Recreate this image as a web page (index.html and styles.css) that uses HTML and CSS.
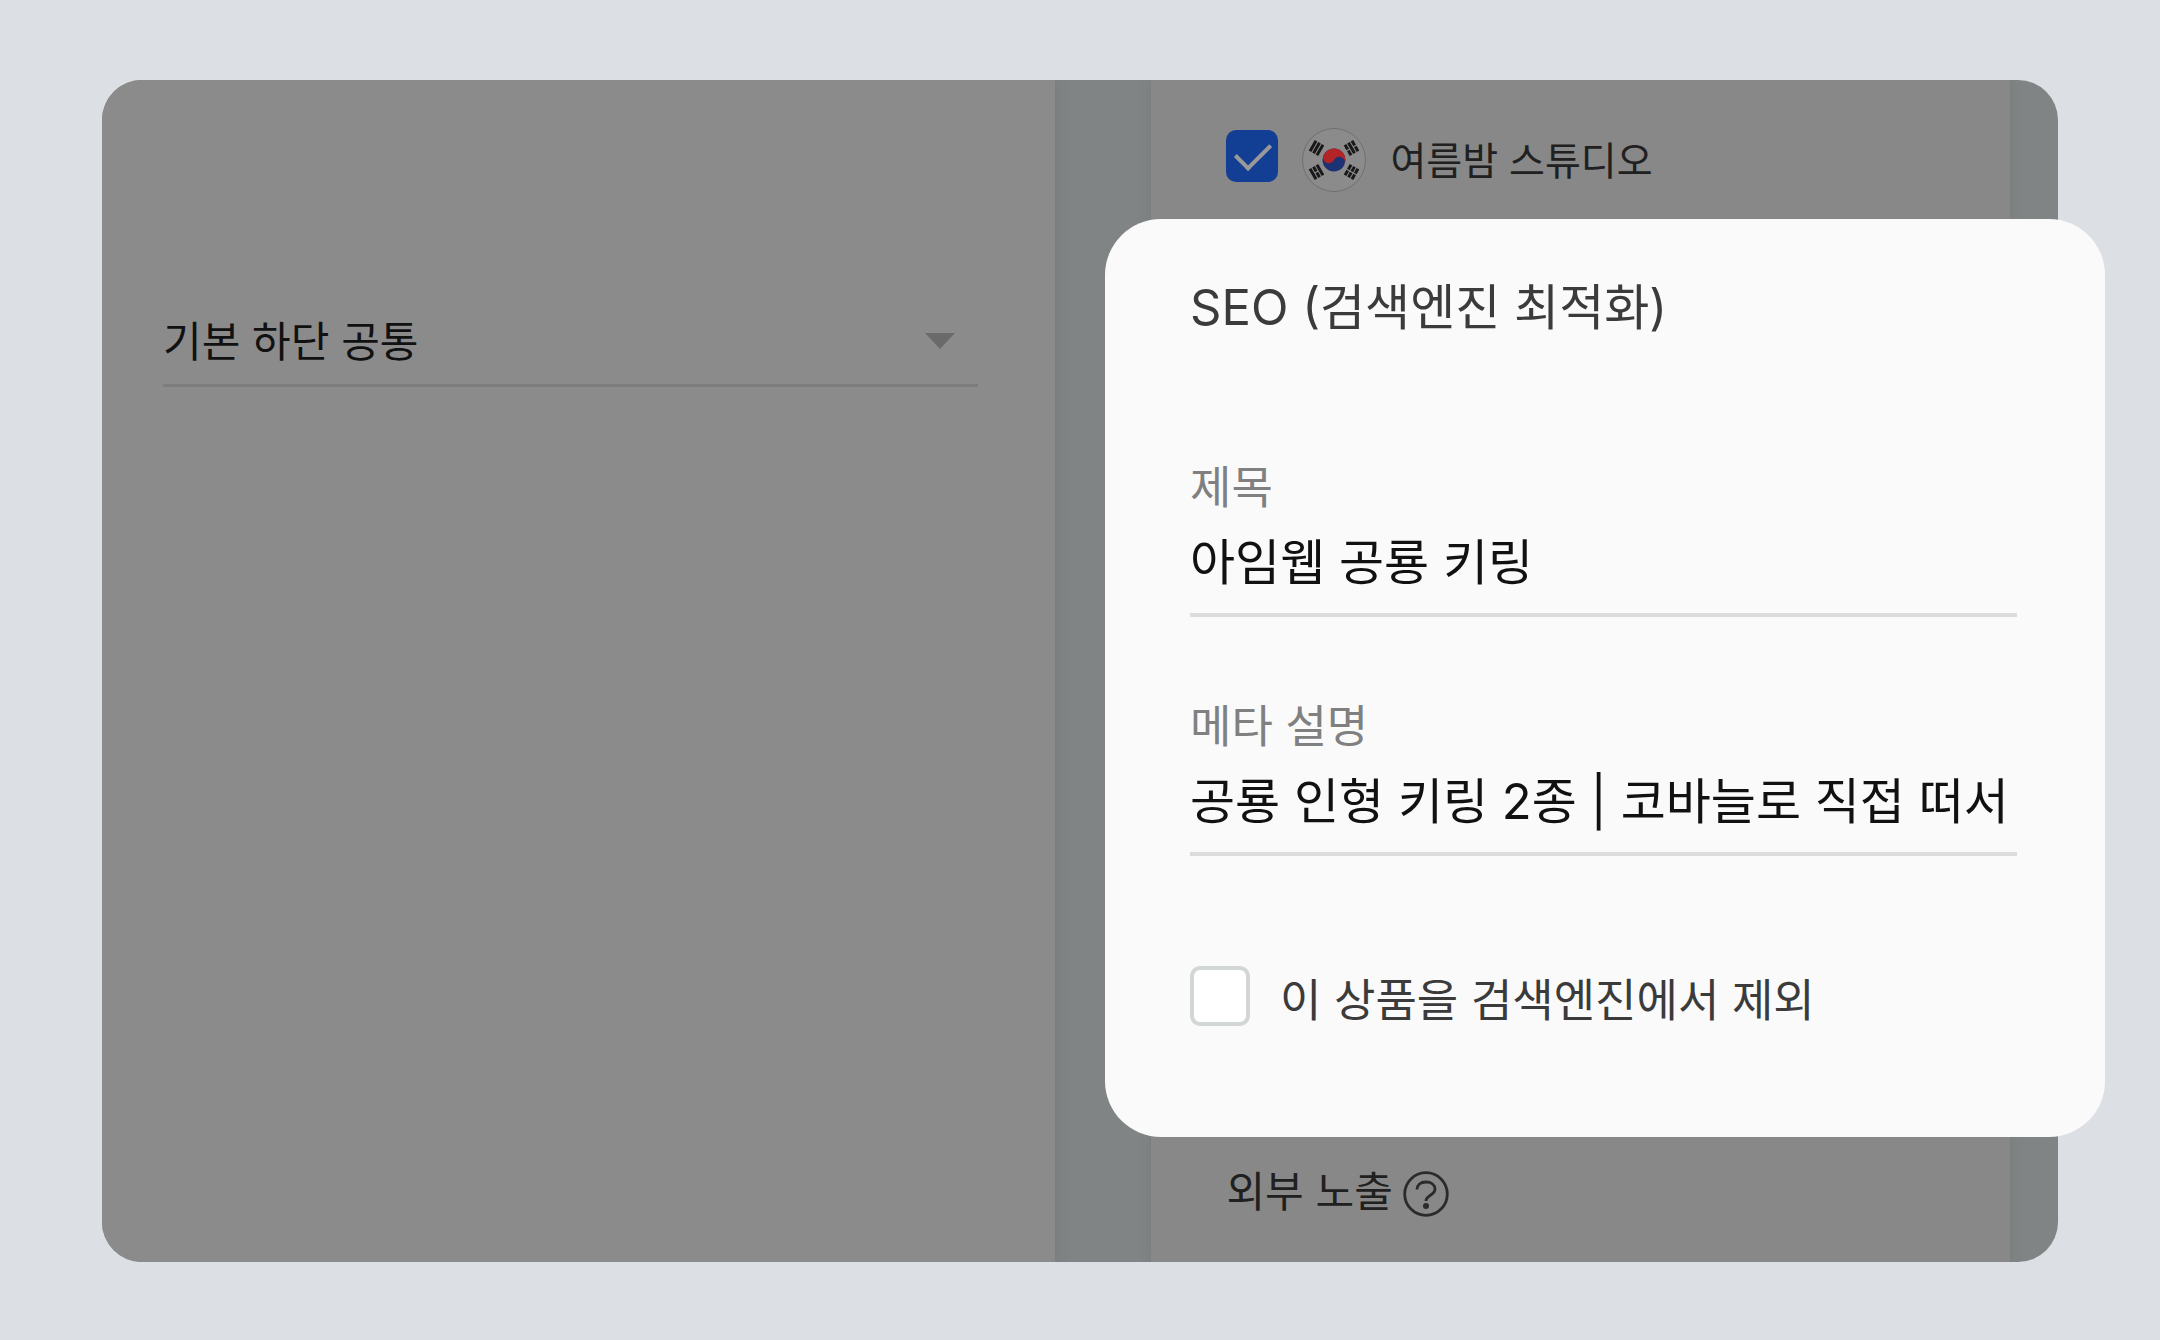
FILE: index.html
```html
<!DOCTYPE html>
<html lang="ko">
<head>
  <meta charset="UTF-8">
  <meta name="viewport" content="width=device-width, initial-scale=1.0">
  <title>SEO (검색엔진 최적화)</title>
  <link rel="stylesheet" href="styles.css">
</head>
<body>

  <main class="stage">
    <div class="backdrop">
      <section class="content">
        <div class="select-box">
          <select class="select" aria-label="하단 공통">
            <option>기본 하단 공통</option>
          </select>
        </div>
      </section>

      <aside class="side">
        <label class="site">
          <input class="check check-on" type="checkbox" checked>
          <svg class="flag" viewBox="0 0 64 64" aria-hidden="true">
            <circle cx="32" cy="32" r="31.5" fill="#8b8b8b" stroke="#707070"/>
            <g transform="rotate(25 32 32)">
              <circle cx="32" cy="32" r="11.5" fill="#1d3275"/>
              <path d="M20.5 32a11.5 11.5 0 0 1 23 0a5.75 5.75 0 0 0-11.5 0a5.75 5.75 0 0 1-11.5 0z" fill="#b32426"/>
            </g>
            <g stroke="#191919" stroke-width="3">
              <g transform="translate(14.5 20) rotate(-60)">
                <path d="M-6-4H6M-6 0H6M-6 4H6"/>
              </g>
              <g transform="translate(49.5 20) rotate(60)">
                <path d="M-6-4H-.6M.6-4H6M-6 0H6M-6 4H-.6M.6 4H6"/>
              </g>
              <g transform="translate(14.5 44) rotate(60)">
                <path d="M-6-4H6M-6 0H-.6M.6 0H6M-6 4H6"/>
              </g>
              <g transform="translate(49.5 44) rotate(-60)">
                <path d="M-6-4H-.6M.6-4H6M-6 0H-.6M.6 0H6M-6 4H-.6M.6 4H6"/>
              </g>
            </g>
          </svg>
          <span class="site-name">여름밤 스튜디오</span>
        </label>

        <div class="expose">
          <span class="expose-name">외부 노출</span>
          <button class="help" type="button" aria-label="도움말">
            <svg viewBox="0 0 46 46" fill="none" stroke="#2b2b2b" stroke-width="2.8">
              <circle cx="23" cy="23" r="21.3"/>
              <path d="M14 18.500c0-4.500 3.500-7.500 9-7.500s9 3 9 7c0 6.500-9 6-9 12"/>
              <circle cx="23" cy="35" r="3" fill="#2b2b2b" stroke="none"/>
            </svg>
          </button>
        </div>
      </aside>
    </div>

    <form class="seo">
      <h1 class="seo-title">SEO (검색엔진 최적화)</h1>

      <div class="field">
        <label for="seoTitle">제목</label>
        <input id="seoTitle" type="text" value="아임웹 공룡 키링">
      </div>

      <div class="field">
        <label for="seoDesc">메타 설명</label>
        <input id="seoDesc" type="text" value="공룡 인형 키링 2종 | 코바늘로 직접 떠서">
      </div>

      <label class="exclude">
        <input class="check" type="checkbox">
        <span class="exclude-name">이 상품을 검색엔진에서 제외</span>
      </label>
    </form>
  </main>

</body>
</html>
```
FILE: styles.css
```css
* {
  box-sizing: border-box;
}
body {
  margin: 0;
  padding: 80px 102px 78px;
  min-height: 100vh;
  display: flex;
  background: #dce0e5;
  color: #202020;
  font-family: Inter, "Noto Sans CJK KR", sans-serif;
}
input,
select,
button {
  font-family: inherit;
}

/* 어둡게 깔린 배경 화면 */
.stage {
  position: relative;
  flex: 1;
  display: flex;
}
.backdrop {
  flex: 1;
  display: flex;
  padding-right: 48px;
  border-radius: 40px;
  background: #808485;
  overflow: hidden;
}
.content {
  flex: 1;
  margin-right: 96px;
  padding: 228px 77px 0 61px;
  background: #8b8b8b;
  box-shadow: 2px 0 8px rgba(120, 120, 120, 0.7);
}
.select-box {
  position: relative;
}
.select-box::after {
  content: "";
  position: absolute;
  top: 25px;
  right: 23px;
  border: 15px solid transparent;
  border-top: 16px solid #6a6a6a;
  border-bottom: 0;
  pointer-events: none;
}
.select {
  display: block;
  width: 100%;
  height: 79px;
  padding: 0 60px 10px 0;
  appearance: none;
  border: 0;
  border-bottom: 3px solid #7d7d7d;
  border-radius: 0;
  background: transparent;
  color: #111;
  font-size: 42px;
}
.side {
  width: 45%;
  padding: 44px 75px;
  display: flex;
  flex-direction: column;
  justify-content: space-between;
  background: #888;
  box-shadow: 0 0 8px rgba(120, 120, 120, 0.8);
}
.site {
  display: flex;
  align-items: center;
  height: 72px;
  font-size: 39px;
}
.site-name {
  padding-bottom: 5px;
}
.flag {
  width: 64px;
  height: 64px;
  margin: 0 24px;
}
.expose {
  display: flex;
  align-items: center;
  gap: 10px;
  height: 52px;
  font-size: 42px;
}
.expose-name {
  padding-bottom: 8px;
}
.help {
  width: 46px;
  height: 46px;
  margin-top: 4px;
  padding: 0;
  border: 0;
  background: none;
}
.help svg {
  display: block;
}

.check {
  flex: none;
  appearance: none;
  width: 60px;
  height: 60px;
  margin: 0;
  border: 4px solid #d2d6d6;
  border-radius: 10px;
  background: #fff;
}
.check-on {
  position: relative;
  align-self: flex-start;
  width: 52px;
  height: 52px;
  margin-top: 6px;
  border: 0;
  background: #123f93;
}
.check-on::after {
  content: "";
  position: absolute;
  top: 5px;
  left: 17px;
  width: 16px;
  height: 30px;
  border: solid #999;
  border-width: 0 4px 4px 0;
  transform: rotate(45deg);
}

/* SEO 설정 */
.seo {
  position: absolute;
  top: 139px;
  right: -47px;
  width: calc(50% + 22px);
  min-height: 918px;
  padding: 53px 88px 0 85px;
  border-radius: 56px;
  background: #fafafa;
}
.seo-title {
  margin: 0 0 108px;
  color: #3b3b3b;
  font-size: 49px;
  font-weight: 400;
  line-height: 72px;
}
.field {
  margin-bottom: 74px;
}
.field label {
  display: block;
  color: #808080;
  font-size: 45px;
  line-height: 72px;
}
.field input {
  display: block;
  width: 100%;
  height: 93px;
  padding: 0 0 20px;
  border: 0;
  border-bottom: 4px solid #dcdcdc;
  background: transparent;
  color: #111;
  font-size: 49px;
}
.exclude {
  display: flex;
  align-items: center;
  gap: 30px;
  margin-top: 101px;
  color: #3b3b3b;
  font-size: 45px;
  line-height: 68px;
}
.exclude-name {
  padding-top: 10px;
}
```
